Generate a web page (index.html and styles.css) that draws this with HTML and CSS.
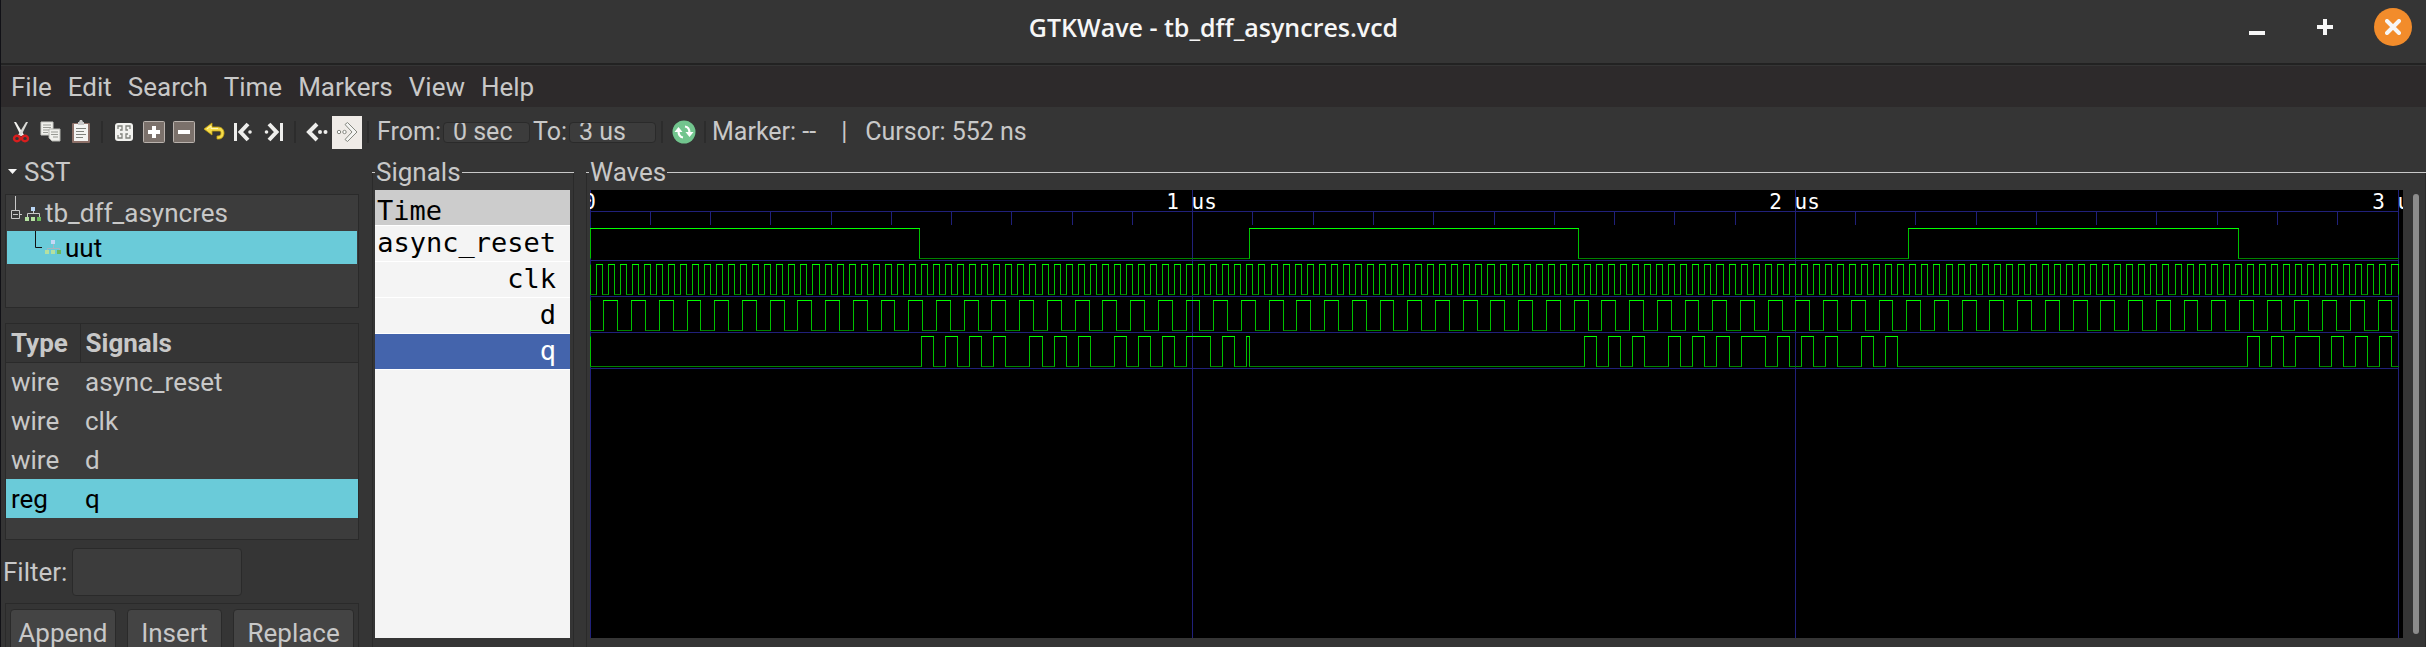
FILE: index.html
```html
<!DOCTYPE html>
<html lang="en">
<head>
<meta charset="utf-8">
<title>GTKWave - tb_dff_asyncres.vcd</title>
<link rel="stylesheet" href="styles.css">
</head>
<body>
<div class="window">
  <header class="titlebar">
    <h1 class="title">GTKWave - tb_dff_asyncres.vcd</h1>
    <div class="win-buttons">
      <button class="win-btn" aria-label="Minimize"><svg width="16" height="16"><path d="M0 12h16v4H0z" fill="#f6f6f6"/></svg></button>
      <button class="win-btn" aria-label="Maximize"><svg width="16" height="16"><path d="M6 0h4v6h6v4h-6v6H6v-6H0V6h6z" fill="#f6f6f6"/></svg></button>
      <button class="win-btn close" aria-label="Close"><svg width="16" height="16"><path d="M2 2l12 12M14 2L2 14" stroke="#f6f6f6" stroke-width="4" stroke-linecap="round"/></svg></button>
    </div>
  </header>
  <nav class="menubar">
    <button>File</button><button>Edit</button><button>Search</button><button>Time</button><button>Markers</button><button>View</button><button>Help</button>
  </nav>
  <div class="toolbar">
    <button class="tool" aria-label="Cut"><svg width="22" height="24"><path d="M4 2l2 0 8 13-3 1z" fill="#f3f3f0"/><path d="M18 2l-2 0-8 13 3 1z" fill="#d9dad6"/><g fill="none" stroke="#d81e1e" stroke-width="2.4"><ellipse cx="7" cy="18.500" rx="3" ry="2.800"/><ellipse cx="15" cy="18.500" rx="3" ry="2.800"/></g></svg></button>
    <button class="tool" aria-label="Copy"><svg width="22" height="24"><path d="M1 2h12v13H1z" fill="#f0f0ec" stroke="#c9cac5"/><path d="M3 5h8M3 7.500h8M3 10h8M3 12.500h5" stroke="#989a94"/><path d="M9 9h11v12H12l-3-3z" fill="#f0f0ec" stroke="#b4b5b0"/><path d="M11 12h7M11 14.500h7M13 17h5" stroke="#989a94"/></svg></button>
    <button class="tool" aria-label="Paste"><svg width="22" height="24"><rect x="2" y="3" width="18" height="20" rx="1" fill="#8d7068"/><path d="M4 4h14v17H4z" fill="#f4f4f2"/><path d="M8 2h1l1-2h2l1 2h1v3H8z" fill="#c9c9c9"/><path d="M6 8.500h10M6 11.500h8M6 14.500h10M6 17.500h7" stroke="#81837d"/></svg></button>
    <span class="sep"></span>
    <button class="tool" aria-label="Zoom fit"><svg width="22" height="24"><rect x="2" y="3" width="18" height="18" rx="3" fill="#f2f2ef"/><path d="M5 9V6h4v2M13 8V6h4v3M5 15v3h4v-2M13 16v2h4v-3M7 10h2V8M15 10h-2V8M7 14h2v2M15 14h-2v2" fill="none" stroke="#80827c" stroke-width="1.300"/></svg></button>
    <button class="tool" aria-label="Zoom in"><svg width="22" height="24"><rect x=".5" y="1.500" width="21" height="21" rx="1" fill="#7b716b" stroke="#b9b2ad"/><path d="M9 6h4v4h4v4h-4v4H9v-4H5v-4h4z" fill="#fff"/></svg></button>
    <button class="tool" aria-label="Zoom out"><svg width="22" height="24"><rect x=".5" y="1.500" width="21" height="21" rx="1" fill="#7b716b" stroke="#b9b2ad"/><path d="M5 10h12v4H5z" fill="#fff"/></svg></button>
    <button class="tool" aria-label="Undo"><svg width="22" height="24"><path d="M1 9l8-6v4h6c4 0 6 3 6 6s-2 6-5 6h-2v-3h1c2 0 3-1 3-3s-1-2-3-2H9v4z" fill="#f5dc4b" stroke="#c7a410" stroke-width=".8"/><path d="M4 9l4-3v2.500h7" fill="none" stroke="#fff6b5"/></svg></button>
    <button class="tool" aria-label="Go to start"><svg width="22" height="24"><path d="M1 3h3v18H1z" fill="#eeeeec"/><path d="M15 4l-7.500 8 7.500 8" fill="none" stroke="#eeeeec" stroke-width="4"/><circle cx="17" cy="12" r="1.800" fill="#eeeeec"/></svg></button>
    <button class="tool" aria-label="Go to end"><svg width="22" height="24"><path d="M17 3h3v18h-3z" fill="#eeeeec"/><path d="M6 4l7.500 8L6 20" fill="none" stroke="#eeeeec" stroke-width="4"/><circle cx="3.500" cy="12" r="1.800" fill="#eeeeec"/></svg></button>
    <span class="sep"></span>
    <button class="tool" aria-label="Previous edge"><svg width="22" height="24"><path d="M11 4l-8 8 8 8" fill="none" stroke="#eeeeec" stroke-width="4"/><circle cx="14" cy="12" r="2" fill="#eeeeec"/><circle cx="19.500" cy="12" r="2" fill="#eeeeec"/></svg></button>
    <button class="tool lit" aria-label="Next edge"><svg width="22" height="24"><path d="M9 4.500l2.500-2L21 12l-9.500 9.500-2.500-2L16 12z" fill="#f4f4f2" stroke="#85877f"/><g fill="#fff" stroke="#85877f"><circle cx="3" cy="12" r="1.700"/><circle cx="8.500" cy="12" r="1.700"/></g></svg></button>
    <span class="sep wide"></span>
    <label for="from">From:</label><input id="from" class="entry" value="0 sec">
    <label for="to" class="to">To:</label><input id="to" class="entry" value="3 us">
    <span class="sep"></span>
    <button class="tool" aria-label="Reload"><svg width="24" height="24"><circle cx="12" cy="12" r="11.500" fill="#72c58e"/><path d="M11 17.500C7.500 17 6.500 14 6.500 11M13 6.500c3.500.5 4.500 3.500 4.500 6.500" fill="none" stroke="#fff" stroke-width="2.200"/><path d="M2.500 12h8L6.500 7zM13.500 12h8l-4 5z" fill="#fff"/></svg></button>
    <span class="sep"></span>
    <span class="status">Marker: --</span><span class="bar">|</span><span>Cursor: 552 ns</span>
  </div>
  <main class="main">
    <section class="side">
      <div class="sst"><svg width="9" height="5"><path d="M0 0h9L4.500 5z" fill="#f6f6f6"/></svg>SST</div>
      <div class="box tree">
        <div class="node"><svg width="38" height="36"><g fill="none" stroke="#c8c8c8"><path d="M8.500 1v14M4.500 15.500h8v8h-8zM6 19.500h5M13 19.500h2"/><path d="M20.500 22v-3.500h12V22M26.500 15v4"/></g><path d="M24 12h4v4h-4z" fill="#b9d5f5"/><path d="M18 22h4v4h-4zM24 22h4v4h-4z" fill="#b4e0a0"/><path d="M30 22h4v4h-4z" fill="#6cb85c"/></svg>tb_dff_asyncres</div>
        <div class="node selected"><svg width="58" height="33"><path d="M28.500 0v16.500H35" fill="none" stroke="#111"/><path d="M40.500 20v-2.500h12V20M46.500 13v5" fill="none" stroke="#a9b5c0"/><path d="M44 9h4v4h-4z" fill="#c5d8f7"/><path d="M38 19h4v4h-4zM44 19h4v4h-4z" fill="#b4e0a0"/><path d="M50 19h4v4h-4z" fill="#6cb85c"/></svg>uut</div>
      </div>
      <div class="box list">
        <table>
          <thead><tr><th>Type</th><th>Signals</th></tr></thead>
          <tbody>
            <tr><td>wire</td><td>async_reset</td></tr>
            <tr><td>wire</td><td>clk</td></tr>
            <tr><td>wire</td><td>d</td></tr>
            <tr class="selected"><td>reg</td><td>q</td></tr>
          </tbody>
        </table>
      </div>
      <div class="filter"><label for="filter">Filter:</label><input id="filter" type="text"></div>
      <div class="actions"><button>Append</button><button>Insert</button><button>Replace</button></div>
    </section>
    <section class="frame signals">
      <h2>Signals</h2>
      <div class="names">
        <div class="time">Time</div>
        <div>async_reset</div>
        <div>clk</div>
        <div>d</div>
        <div class="active">q</div>
      </div>
    </section>
    <section class="frame waves">
      <h2>Waves</h2>
      <div class="wave-row">
        <div class="canvas"><svg id="plot"></svg></div>
        <div class="scroll"><div class="thumb"></div></div>
      </div>
    </section>
  </main>
</div>
<script src="waves.js"></script>
</body>
</html>
```
FILE: styles.css
```css
* { box-sizing: border-box; }
body {
  margin: 0;
  height: 100vh;
  overflow: hidden;
  background: #353535;
  color: #c8c8c8;
  font: 26px/30px Roboto, sans-serif;
}
button, input { font: inherit; color: inherit; border: 0; padding: 0; background: none; }
svg { display: block; flex: none; }
.window {
  height: 100%;
  display: flex;
  flex-direction: column;
  border-left: 1px solid #111116;
}
.titlebar {
  display: grid;
  grid-template-columns: 1fr auto 1fr;
  align-items: center;
  height: 65px;
  padding: 0 14px 10px;
  border-bottom: 2px solid #222;
  flex: none;
}
.title {
  grid-column: 2;
  margin: 0;
  font: 600 25px/30px "Open Sans", sans-serif;
  color: #f6f6f6;
}
.win-buttons { display: flex; justify-content: flex-end; gap: 30px; }
.win-btn { width: 38px; height: 38px; display: grid; place-items: center; border-radius: 50%; }
.close { background: #f28c2b; }
.menubar {
  display: flex;
  gap: 16px;
  height: 41px;
  margin-top: 1px;
  padding: 0 10px;
  background: #2d2a2b;
  flex: none;
}
.toolbar {
  display: flex;
  align-items: center;
  height: 50px;
  padding-left: 5px;
  font-size: 25px;
  flex: none;
}
.tool { width: 30px; height: 33px; display: grid; place-items: center; }
.lit { background: #efebe7; }
.sep { width: 2px; height: 22px; margin: 0 6px 0 5px; background: #2c2c2c; flex: none; }
.sep.wide { margin-right: 8px; }
.entry {
  width: 87px;
  height: 21px;
  margin-left: 2px;
  padding: 0 9px;
  border: 1px solid #2a2a2a;
  border-radius: 4px;
  background: #3c3c3c;
}
.to { margin-left: 3px; }
.bar { margin: 0 18px 0 25px; }
.main { flex: 1; display: flex; min-height: 0; }
.side { width: 358px; padding-left: 4px; flex: none; }
.sst { display: flex; align-items: center; gap: 7px; height: 37px; padding: 0 0 8px 3px; }
.box { border: 1px solid #2a2a2a; background: #3c3c3c; }
.tree { height: 114px; padding: 0 1px; }
.node { display: flex; align-items: center; height: 36px; }
.node.selected { height: 33px; }
.selected { background: #6acbd9; color: #000; }
.list { height: 217px; margin-top: 15px; }
table { width: 100%; border-collapse: collapse; }
th, td { padding: 0 6px 0 5px; text-align: left; height: 39px; }
th { height: 38px; background: #353535; border-bottom: 1px solid #2a2a2a; }
th:first-child { width: 74px; border-right: 1px solid #2a2a2a; }
.filter { display: flex; align-items: center; gap: 5px; margin-top: 8px; margin-left: -2px; }
.filter input { width: 170px; height: 48px; border: 1px solid #2a2a2a; border-radius: 4px; background: #3c3c3c; padding: 0 8px; }
.actions {
  display: grid;
  grid-template-columns: 105fr 95fr 120fr;
  gap: 11px;
  margin-top: 7px;
  padding: 5px 4px;
  border: 1px solid #2a2a2a;
}
.actions button { height: 48px; border: 1px solid #2a2a2a; border-radius: 4px; background: #444; }
.frame {
  display: flex;
  flex-direction: column;
  min-width: 0;
  padding-bottom: 9px;
  background:
    linear-gradient(#2a2a2a, #2a2a2a) 0 16px / 1px 100% no-repeat,
    linear-gradient(#2a2a2a, #2a2a2a) 100% 16px / 1px 100% no-repeat;
}
.signals { width: 202px; margin-left: 13px; flex: none; }
.waves { flex: 1; margin-left: 12px; }
h2 {
  display: flex;
  align-items: center;
  gap: 1px;
  margin: 0;
  font: inherit;
  height: 33px;
  padding-bottom: 3px;
}
h2::before { content: ""; width: 3px; height: 1px; background: #c8c8c8; }
h2::after { content: ""; flex: 1; height: 1px; background: #c8c8c8; }
.names {
  flex: 1;
  margin: 0 4px 0 3px;
  background: #f4f4f4;
  color: #000;
  font: 27px/34px "DejaVu Sans Mono", monospace;
  text-align: right;
}
.names div { height: 36px; padding: 0 14px 0 2px; border-bottom: 1px solid #fff; }
.names .time { background: #ccc; text-align: left; padding-top: 7px; line-height: 28px; }
.names .active { background: #4464ac; color: #fff; }
.wave-row { flex: 1; display: flex; min-height: 0; }
.canvas { flex: 1; min-width: 0; margin-left: 4px; background: #000; overflow: hidden; }
.canvas svg { width: 100%; height: 100%; }
.scroll { width: 23px; padding: 4px 7px 4px 10px; }
.thumb { height: 100%; border-radius: 3px; background: #8c8c8c; }
.grid { fill: none; stroke: #20207a; }
.high { fill: none; stroke: #00ff00; }
.low { fill: none; stroke: #008200; }
.edge { fill: none; stroke: #00c000; }
.tick-label { fill: #fff; font: 21px "DejaVu Sans Mono", monospace; text-anchor: middle; }
```
FILE: waves.js
```js
const END = 3000;            // ns shown
const ROW = 36;              // trace pitch, px
const plot = document.getElementById('plot');

const reset = t => Math.floor(t / 547) % 2 === 0;
const clk = t => Math.floor(t / 10) % 2 === 1;
const d = t => Math.floor(t / 23) % 2 === 1;
// q follows d at each rising clock edge, cleared while reset is high
const q = t => {
  if (reset(t)) return false;
  const edge = Math.floor((t - 10) / 20) * 20 + 10;
  return !reset(edge) && d(edge);
};

function add(name, attrs, text) {
  const el = document.createElementNS('http://www.w3.org/2000/svg', name);
  for (const k in attrs) el.setAttribute(k, attrs[k]);
  if (text) el.textContent = text;
  plot.appendChild(el);
}

function draw() {
  plot.replaceChildren();
  const scale = (plot.clientWidth - 5) / END;
  const X = t => Math.floor(t * scale) + 0.5;
  const right = X(END);
  let grid = `M0 21.5H${right}`;
  for (let t = 0; t <= END; t += 100) {
    grid += `M${X(t)} ${t % 1000 ? '21V35' : '0V' + plot.clientHeight}`;
  }
  [reset, clk, d, q].forEach((_, i) => { grid += `M0 ${70.5 + i * ROW}H${right}`; });
  add('path', { class: 'grid', d: grid });

  [reset, clk, d, q].forEach((signal, i) => {
    const hi = 38.5 + i * ROW, lo = hi + 30;
    let high = '', low = '', edge = `M.5 ${hi}V${lo}`;
    let start = 0, level = signal(0);
    for (let t = 1; t <= END; t++) {
      const next = signal(t);
      if (next === level && t < END) continue;
      const seg = `M${X(start) - 0.5} ${level ? hi : lo}H${X(t) + 0.5}`;
      if (level) high += seg; else low += seg;
      if (next !== level) edge += `M${X(t)} ${hi}V${lo}`;
      start = t;
      level = next;
    }
    add('path', { class: 'low', d: low });
    add('path', { class: 'edge', d: edge });
    add('path', { class: 'high', d: high });
  });

  ['0', '1 us', '2 us', '3 us'].forEach((label, i) => {
    add('text', { class: 'tick-label', x: X(i * 1000) - 1, y: 19 }, label);
  });
}

draw();
window.addEventListener('resize', draw);
```
